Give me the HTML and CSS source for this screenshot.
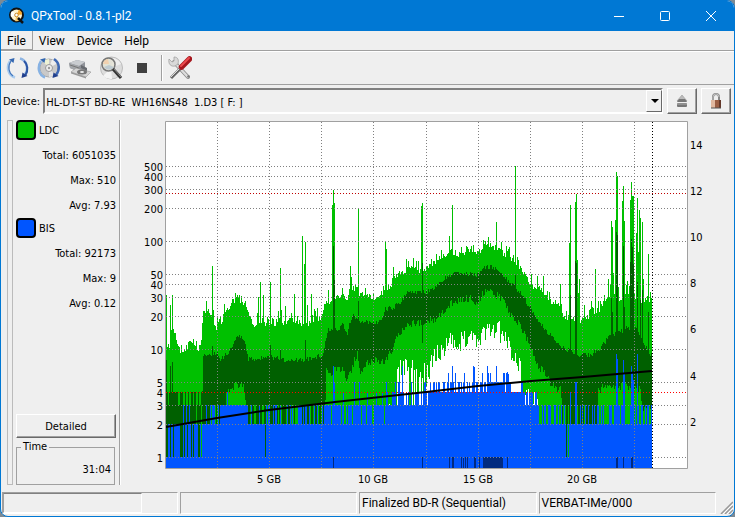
FILE: index.html
```html
<!DOCTYPE html>
<html lang="en">
<head>
    <meta charset="UTF-8">
    <meta name="viewport" content="width=device-width, initial-scale=1.0">
    <title>QPxTool - 0.8.1-pl2</title>
    <link rel="stylesheet" href="styles.css">
</head>
<body>
    <div class="window">
        <header class="titlebar">
            <svg class="app-icon" width="18" height="18" viewBox="0 0 18 18">
                <circle cx="8.500" cy="8" r="6.500" fill="#fff3d0" stroke="#111" stroke-width="2"/>
                <path d="M8.500 8L4 4a6 6 0 0 0-1 6z" fill="#fff"/>
                <path d="M8.500 8L11 2.500a6 6 0 0 1 3 5z" fill="#f6a62a"/>
                <path d="M8.500 8L7 14a6 6 0 0 0 5-1z" fill="#f8c96a"/>
                <circle cx="8.500" cy="8" r="1.800" fill="#fff" stroke="#c98a2a"/>
                <path d="M10 11l5 5" stroke="#111" stroke-width="2.500"/>
            </svg>
            <span class="title">QPxTool - 0.8.1-pl2</span>
            <button class="caption" aria-label="Minimize"><svg width="12" height="12" viewBox="0 0 12 12"><path d="M1 6.500h10"/></svg></button>
            <button class="caption" aria-label="Maximize"><svg width="12" height="12" viewBox="0 0 12 12"><rect x="1.500" y="1.500" width="9" height="9" rx="1"/></svg></button>
            <button class="caption" aria-label="Close"><svg width="12" height="12" viewBox="0 0 12 12"><path d="M1 1l10 10M11 1L1 11"/></svg></button>
        </header>

        <nav class="menubar">
            <button class="menu active">File</button>
            <button class="menu">View</button>
            <button class="menu">Device</button>
            <button class="menu">Help</button>
        </nav>

        <div class="toolbar">
            <button class="tool" aria-label="Rescan bus">
                <svg width="24" height="24" viewBox="0 0 24 24" fill="none">
                    <path d="M9 21.500C2 19 0 11 4 5" stroke="#a9cbee" stroke-width="2.500"/>
                    <path d="M7 20C2.500 17 1.500 10 5 5" stroke="#4377bd" stroke-width="1.200"/>
                    <path d="M3 3.500l5.500-1.500-1 5z" fill="#3467b0"/>
                    <path d="M14 2.500c7 2 9 10 5 16" stroke="#8db4e2" stroke-width="2.500"/>
                    <path d="M18 5c3.500 3 4.500 9 1.500 14" stroke="#2d55a4" stroke-width="2"/>
                    <path d="M21.500 20l-6 2 1-5.500z" fill="#213f8c"/>
                </svg>
            </button>
            <button class="tool" aria-label="Reload media">
                <svg width="24" height="24" viewBox="0 0 24 24" fill="none">
                    <circle cx="12" cy="12" r="9" fill="#c9c9c9" stroke="#aaa"/>
                    <path d="M12 12L6 5.500A9 9 0 0 1 12 3z" fill="#eef3d5"/>
                    <path d="M12 12l3-8.500a9 9 0 0 1 5 4z" fill="#eee"/>
                    <path d="M12 12l6 7a9 9 0 0 1-6 2z" fill="#e3e3e3"/>
                    <circle cx="12" cy="12" r="3.500" fill="#eee" stroke="#999"/>
                    <circle cx="12" cy="12" r="1.200" fill="#999"/>
                    <path d="M8 21.500C1.500 19 0 11 4 5" stroke="#87b2e3" stroke-width="2.500"/>
                    <path d="M3 3.500l5.500-1.500-1 5z" fill="#3467b0"/>
                    <path d="M17 3c6 4 6 11 2 16" stroke="#3e68b4" stroke-width="2.500"/>
                    <path d="M21.500 20l-6 2 1-5.500z" fill="#213f8c"/>
                </svg>
            </button>
            <button class="tool" aria-label="Device info">
                <svg width="24" height="24" viewBox="0 0 24 24">
                    <path d="M1 7l8-3 8 2v7l-5 3L2 12z" fill="#8f9298"/>
                    <path d="M1 7l8-3 8 2-6 4z" fill="#c9ccd0"/>
                    <path d="M1 7l10 3v6L2 12z" fill="#a3a6aa"/>
                    <path d="M3 16l5-4 15 4-5 5z" fill="#d4d4d4" stroke="#888" stroke-width=".5"/>
                    <path d="M3 16l15 5v1.500L3 17.500z" fill="#999"/>
                    <ellipse cx="14" cy="16" rx="5" ry="2.500" fill="#777"/>
                    <ellipse cx="14" cy="16" rx="2" ry="1" fill="#eee"/>
                    <path d="M13 9l6 3v3l-6-3z" fill="#686b70"/>
                    <path d="M2 9l9 3" stroke="#777"/>
                </svg>
            </button>
            <button class="tool" aria-label="Media info">
                <svg width="26" height="24" viewBox="0 0 26 24" fill="none">
                    <circle cx="13.500" cy="12" r="11" fill="#dcdcdc" stroke="#bbb"/>
                    <path d="M13 12L3 8a11 11 0 0 1 8-7z" fill="#d5e7d3"/>
                    <path d="M13 12l2-10a11 11 0 0 1 8 6z" fill="#eee"/>
                    <path d="M13 12L5 20a11 11 0 0 0 9 3z" fill="#f4f4f4"/>
                    <circle cx="10.500" cy="8.500" r="6.500" fill="#e4e2d4" fill-opacity=".8" stroke="#777" stroke-width="1.500"/>
                    <path d="M5 8a6 6 0 0 1 5-5l1 5z" fill="#f1d1b0"/>
                    <path d="M6 11l5-2 5 2a6 6 0 0 1-10 0z" fill="#bfcbd1"/>
                    <path d="M15 13l8 9" stroke="#333" stroke-width="3"/>
                    <path d="M16 13l7 8" stroke="#888"/>
                </svg>
            </button>
            <button class="tool" aria-label="Stop">
                <svg width="24" height="24" viewBox="0 0 24 24"><rect x="7" y="7" width="10" height="10" fill="#404040"/></svg>
            </button>
            <span class="tool-sep"></span>
            <button class="tool" aria-label="Preferences">
                <svg width="24" height="24" viewBox="0 0 24 24" fill="none">
                    <path d="M6 6l14 15" stroke="#888" stroke-width="4" stroke-linecap="round"/>
                    <path d="M6 6l14 15" stroke="#dcdcdc" stroke-width="2.500" stroke-linecap="round"/>
                    <path d="M1 3l3 3 2-1V1c4 0 5 3 4 7l-3 2C3 11 0 8 1 3z" fill="#d9d9d9" stroke="#999" stroke-width=".7"/>
                    <circle cx="20.500" cy="20.500" r="1.300" fill="#777"/>
                    <path d="M13 12L3 22" stroke="#666" stroke-width="3"/>
                    <path d="M12 12L3 21" stroke="#ddd"/>
                    <path d="M13.500 11l8-8" stroke="#a5161d" stroke-width="5.500" stroke-linecap="round"/>
                    <path d="M13 10l8-8" stroke="#ec4a4e" stroke-width="2" stroke-linecap="round"/>
                </svg>
            </button>
        </div>

        <div class="device-row">
            <label for="device">Device:</label>
            <div class="combo">
                <select id="device">
                    <option>HL-DT-ST BD-RE &nbsp;WH16NS48 &nbsp;1.D3 [ F: ]</option>
                </select>
                <span class="combo-arrow"></span>
            </div>
            <button class="push icon-push" aria-label="Eject">
                <svg width="12" height="14" viewBox="0 0 12 14">
                    <path d="M6 1l5 6H1z" fill="#bbb" stroke="#999" stroke-width=".6"/>
                    <path d="M3 5h6l2 3H1z" fill="#777"/>
                    <rect x="1" y="9" width="10" height="4" rx="1" fill="#777"/>
                    <path d="M1 10h10" stroke="#aaa"/>
                </svg>
            </button>
            <button class="push icon-push" aria-label="Lock">
                <svg width="12" height="18" viewBox="0 0 12 18">
                    <path d="M3 9V5a3 3 0 0 1 6 0v4" fill="none" stroke="#888" stroke-width="2"/>
                    <path d="M3 8V5a3 3 0 0 1 6 0" fill="none" stroke="#ccc" stroke-width=".8"/>
                    <rect x="1" y="8" width="10" height="8" rx="1" fill="#9a5e44"/>
                    <rect x="1" y="8" width="4" height="8" fill="#e0b8a0"/>
                    <rect x="9" y="8" width="2" height="8" fill="#63382a"/>
                    <path d="M1 16h10" stroke="#555"/>
                </svg>
            </button>
        </div>

        <main class="content">
            <div class="splitter"></div>
            <aside class="side">
                <section class="stat">
                    <h2><span class="swatch ldc"></span>LDC</h2>
                    <p>Total: 6051035</p>
                    <p>Max: 510</p>
                    <p>Avg: 7.93</p>
                </section>
                <section class="stat">
                    <h2><span class="swatch bis"></span>BIS</h2>
                    <p>Total: 92173</p>
                    <p>Max: 9</p>
                    <p>Avg: 0.12</p>
                </section>
                <button class="push detailed">Detailed</button>
                <fieldset class="time">
                    <legend>Time</legend>
                    <output>31:04</output>
                </fieldset>
            </aside>
            <div class="divider"></div>
            <svg class="chart" id="chart" viewBox="0 0 613 370" role="img" aria-label="LDC and BIS error rate"></svg>
        </main>

        <footer class="statusbar">
            <div class="pane first"><div class="progress"></div></div>
            <div class="pane"></div>
            <div class="pane">Finalized BD-R (Sequential)</div>
            <div class="pane">VERBAT-IMe/000</div>
            <svg class="grip" width="14" height="14" viewBox="0 0 14 14">
                <path d="M2 14L14 2M6 14l8-8M10 14l4-4" stroke="#999" stroke-width="1.500"/>
                <path d="M4 14L14 4M8 14l6-6" stroke="#fff"/>
            </svg>
        </footer>
    </div>
    <script src="chart.js"></script>
</body>
</html>
```
FILE: styles.css
```css
* {
    box-sizing: border-box;
}
body {
    margin: 0;
    background: #7d8a94;
    color: #000;
    font: 11px "DejaVu Sans Condensed", "Noto Sans", sans-serif;
}
button, select {
    font: inherit;
    color: inherit;
    margin: 0;
    padding: 0;
    border: 0;
    background: none;
}
.window {
    min-height: 100vh;
    display: flex;
    flex-direction: column;
    border: 1px solid #0078d4;
    border-radius: 8px;
    background: #efefef;
    overflow: hidden;
}
.titlebar {
    display: flex;
    align-items: center;
    height: 30px;
    padding-left: 7px;
    background: #0078d4;
    color: #fff;
    font: 12px Roboto, "Open Sans", sans-serif;
}
.title {
    flex: 1;
    margin-left: 5px;
}
.caption {
    width: 46px;
    height: 30px;
    line-height: 0;
}
.caption svg {
    fill: none;
    stroke: #fff;
}
.menubar {
    display: flex;
    height: 20px;
    border-bottom: 1px solid #a0a0a0;
    font: 12px Roboto, "Open Sans", sans-serif;
}
.menu {
    padding: 0 6px;
    height: 19px;
    line-height: 20px;
}
.menu.active {
    border-right: 1px solid #a0a0a0;
    border-bottom: 1px solid #a0a0a0;
}
.toolbar {
    display: flex;
    align-items: center;
    gap: 3px;
    height: 34px;
    padding-left: 3px;
    border-top: 1px solid #fff;
    border-bottom: 1px solid #a0a0a0;
}
.tool {
    width: 28px;
    line-height: 0;
}
.tool-sep {
    width: 2px;
    height: 26px;
    margin-left: 2px;
    border-left: 1px solid #a0a0a0;
    border-right: 1px solid #fff;
}
.device-row {
    display: flex;
    align-items: center;
    gap: 4px;
    padding: 3px 3px 3px 2px;
}
.device-row label {
    margin-right: -1px;
    line-height: 16px;
    padding-top: 2px;
}
.combo {
    position: relative;
    flex: 1;
}
.combo select {
    appearance: none;
    display: block;
    width: 100%;
    height: 26px;
    padding: 2px 0 0 1px;
    border: 2px solid;
    border-color: #808080 #fff #fff #808080;
    background: #efefef;
}
.combo-arrow {
    position: absolute;
    top: 2px;
    right: 1px;
    width: 16px;
    height: 22px;
    border: 1px solid;
    border-color: #fff #696969 #696969 #fff;
    pointer-events: none;
}
.combo-arrow::after {
    content: "";
    position: absolute;
    top: 8px;
    left: 4px;
    border: 4px solid transparent;
    border-top-color: #000;
    border-bottom: 0;
}
.push {
    border: 1px solid;
    border-color: #fff #696969 #696969 #fff;
    box-shadow: inset -1px -1px #a0a0a0;
    background: #efefef;
}
.icon-push {
    display: flex;
    align-items: center;
    justify-content: center;
    width: 30px;
    height: 26px;
}
.content {
    flex: 1;
    display: flex;
    align-items: stretch;
}
.splitter {
    width: 6px;
    margin: 3px 3px 2px 6px;
    border: 1px solid #bbb;
}
.side {
    display: flex;
    flex-direction: column;
    width: 100px;
    padding: 3px 0 2px;
}
.stat h2 {
    display: flex;
    align-items: center;
    gap: 3px;
    height: 20px;
    margin: 0 0 3px;
    font: inherit;
}
.stat p {
    margin: 0;
    line-height: 25px;
    text-align: right;
}
.swatch {
    width: 20px;
    height: 20px;
    border: 2px solid #000;
    border-radius: 4px;
}
.swatch.ldc {
    background: #00c000;
}
.swatch.bis {
    background: #0055ff;
}
.detailed {
    height: 24px;
    margin-top: auto;
}
.time {
    margin: 2px 1px 0 0;
    padding: 8px 3px 6px;
    border: 1px solid #a0a0a0;
}
.time legend {
    margin-left: 1px;
    padding: 0 2px;
    line-height: 14px;
}
.time output {
    display: block;
    line-height: 16px;
    text-align: right;
}
.divider {
    width: 2px;
    margin: 3px 0 2px 3px;
    border-left: 1px solid #a0a0a0;
    border-right: 1px solid #fff;
}
.chart {
    flex: 1;
    min-width: 0;
    align-self: flex-start;
}
.statusbar {
    display: flex;
    gap: 2px;
    padding: 5px 1px 2px;
    font: 12px Roboto, "Open Sans", sans-serif;
}
.pane {
    flex: 1;
    height: 22px;
    padding-left: 2px;
    border: 1px solid;
    border-color: #a0a0a0 #fff #fff #a0a0a0;
    line-height: 21px;
    white-space: nowrap;
}
.pane.first {
    padding-left: 0;
}
.progress {
    width: 80%;
    height: 20px;
    border: 1px solid;
    border-color: #808080 #fff #fff #a0a0a0;
}
.grip {
    align-self: flex-end;
    margin-left: 1px;
}
```
FILE: chart.js
```js
const NS = 'http://www.w3.org/2000/svg';
const LEFT = 45;
const TOP = 5;
const W = 521;
const H = 346;
const GB = W / 25;
const END = 486;

// log scale for errors, linear scale for speed
const yErr = v => Math.round(335 - 108 * Math.log10(v));
const ySpeed = v => Math.round(H - v * 23.1);

const svg = document.getElementById('chart');
const plot = document.createElementNS(NS, 'g');
plot.setAttribute('transform', `translate(${LEFT} ${TOP})`);
svg.appendChild(plot);

function add(name, attrs, text) {
    const el = document.createElementNS(NS, name);
    for (const key in attrs) el.setAttribute(key, attrs[key]);
    if (text) el.textContent = text;
    plot.appendChild(el);
}

let seed = 7;
function rnd() {
    seed = (seed * 16807) % 2147483647;
    return seed / 2147483647;
}

function at(points, x) {
    let i = 0;
    while (i < points.length - 2 && points[i + 1][0] <= x) i++;
    const [x0, y0] = points[i];
    const [x1, y1] = points[i + 1];
    return y0 + (y1 - y0) * Math.min(1, (x - x0) / (x1 - x0));
}

// profiles are [column, height in plot units]
const ldcMax = [[0,222],[3,223],[5,210],[9,213],[12,228],[20,226],[24,218],[28,222],[34,226],[36,210],[37,190],[44,190],[50,204],[56,198],[59,190],[66,181],[71,170],[74,178],[79,181],[84,198],[86,201],[100,200],[125,200],[140,201],[155,198],[159,183],[164,178],[169,175],[177,170],[181,178],[185,164],[191,165],[194,173],[211,175],[216,172],[217,165],[224,165],[227,156],[234,151],[244,146],[254,149],[261,146],[267,141],[274,135],[281,131],[287,130],[294,133],[301,128],[307,131],[314,128],[319,121],[326,124],[334,129],[341,134],[349,140],[356,148],[361,158],[366,164],[374,165],[381,178],[394,181],[397,191],[402,195],[417,198],[422,196],[424,188],[434,188],[437,178],[444,171],[449,178],[460,170],[477,178],[486,178]];
const ldcPeaks = {0:173,4:183,6:173,40:179,46:144,92:175,94:160,97:173,104:160,114:146,119:184,128:172,136:114,138:142,139:120,141:183,145:172,151:186,166:83,167:68,168:81,184:144,192:87,199:166,219:119,220:127,227:145,242:139,247:136,250:139,255:84,256:81,265:137,270:132,275:128,283:114,286:83,300:124,305:124,317:118,322:115,330:100,349:44,352:138,371:154,377:154,394:162,403:121,404:83,409:80,410:72,411:138,412:171,413:157,418:183,425:179,429:147,442:157,445:99,446:105,447:151,449:98,450:50,451:54,452:165,456:79,457:64,458:99,464:78,465:60,466:74,467:74,470:111,471:76,472:130,473:88,474:96,476:100,477:157,482:132,484:170};
const midTop = [[0,270],[36,270],[37,232],[51,232],[54,237],[59,233],[64,228],[67,220],[71,213],[76,216],[79,221],[82,237],[104,235],[119,238],[140,238],[157,233],[159,218],[162,206],[166,210],[176,203],[181,211],[186,192],[194,201],[204,200],[211,202],[216,195],[219,188],[227,185],[232,183],[241,171],[261,170],[267,166],[276,158],[284,153],[297,151],[311,153],[317,145],[331,146],[337,154],[344,161],[354,171],[364,186],[371,199],[381,210],[387,216],[394,223],[401,228],[414,233],[424,233],[434,226],[444,213],[452,211],[461,206],[471,208],[477,221],[486,235]];
const midPeaks = {0:238,4:244,6:240,46:224,104:223,114:228,139:218,167:124,168:158,192:179,219:185,256:141,349:153,404:173,409:139,410:141,445:176,446:190,450:110,451:113,457:124,458:185,464:140,465:117,466:125,467:142,471:160,474:178,476:168,482:190};
const midBottom = [[0,303],[59,303],[60,270],[66,270],[68,262],[77,262],[79,280],[80,303],[158,303],[160,245],[164,251],[177,245],[181,260],[186,245],[191,230],[194,251],[199,241],[207,238],[217,240],[224,231],[229,218],[237,205],[247,201],[257,200],[267,198],[276,191],[281,183],[289,180],[297,178],[304,175],[311,181],[317,171],[327,170],[336,178],[344,192],[354,203],[361,218],[367,231],[372,245],[381,253],[384,262],[394,268],[397,303],[431,303],[432,268],[444,262],[474,268],[476,286],[486,290]];
const ldcMin = [[0,346],[221,346],[222,284],[230,280],[231,251],[237,243],[247,240],[257,250],[262,255],[266,235],[274,228],[284,221],[297,218],[307,213],[314,217],[321,205],[331,207],[341,220],[344,231],[354,245],[357,270],[371,284],[372,346],[486,346]];
const bisPeaks = {99:335,167:244,168:260,188:260,193:260,245:260,259:260,236:244,450:232,451:237,457:238,458:252,465:244,466:250,467:258,471:232,404:270,409:260,410:260,400:335,402:335,307:244,308:245,286:244,321:244,330:244,341:250,342:252};

const Y2 = yErr(2), Y3 = yErr(3), Y4 = yErr(4), Y5 = yErr(5), Y6 = yErr(6);

function bisTop(x) {
    if (x in bisPeaks) return bisPeaks[x];
    const r = rnd();
    if (x < 36) return r < 0.45 ? yErr(1) : r < 0.96 ? Y2 : Y3;
    if (x < 59) return r < 0.5 ? Y3 : Y2;
    if (x < 81) return r < 0.9 ? Y3 : Y4;
    if (x < 158) return r < 0.25 ? Y3 : Y2;
    if (x < 220) return r < 0.68 ? Y3 : r < 0.84 ? Y2 : Y4;
    if (x < 262) return r < 0.4 ? Y3 : r < 0.9 ? Y4 : Y5;
    if (x < 317) return r < 0.5 ? Y4 : r < 0.9 ? Y5 : Y6;
    if (x < 341) return r < 0.15 ? Y4 : r < 0.75 ? Y5 : Y6;
    if (x < 357) return r < 0.5 ? Y5 : Y4;
    if (x < 372) return r < 0.5 ? Y4 : Y3;
    return r < (x < 400 || x > 440 ? 0.5 : 0.25) ? Y3 : Y2;
}

const paths = { ldc: '', mid: '', bis: '', bisMid: '' };
const bar = (x, y0, y1) => y1 > y0 ? `M${x} ${Math.round(y0)}h1V${Math.round(y1)}h-1z` : '';

for (let x = 0; x < END; x++) {
    const noise = x < 220 || x > 395 ? 9 : 6;
    let top = at(ldcMax, x) + (rnd() - 0.5) * noise;
    if (rnd() < 0.12) top -= 8;
    if (x in ldcPeaks) top = ldcPeaks[x];
    let mid = at(midTop, x) + (rnd() - 0.5) * 5;
    if (x < 36) mid = rnd() < 0.25 ? Y3 : Y4;
    if (x in midPeaks) mid = midPeaks[x];
    let midEnd = at(midBottom, x) + (rnd() - 0.5) * 8;
    if ([167, 256, 404, 409, 410, 450, 451, 465, 466].includes(x)) midEnd += 25;
    if (midEnd > 292 && rnd() < (x < 36 ? 0.1 : 0.35)) midEnd = Y3;
    else if (midEnd > 292) midEnd = H;
    let min = at(ldcMin, x);
    if (min < 346) min += (rnd() - 0.5) * 22;
    if (x > 221 && x < 262 && rnd() < 0.4) min = H;
    paths.ldc += bar(x, top, Math.min(min, H));
    paths.mid += bar(x, mid, Math.min(midEnd, min));
    paths.bis += bar(x, bisTop(x), H);
}

const bisDark = [167, 256, 283, 286, 287, 295, 297, 299, 301, 308, 309, 313, 341, 450, 451, 457, 465, 466];
for (let x = 317; x < 337; x++) bisDark.push(x);
bisDark.forEach(x => { paths.bisMid += bar(x, yErr(1), H); });

add('rect', { x: 0, y: 0, width: W, height: H, fill: '#fff' });
const crisp = 'crispEdges';
add('path', { d: paths.ldc, fill: '#00c000', 'shape-rendering': crisp });
add('path', { d: paths.mid, fill: '#006000', 'shape-rendering': crisp });
add('path', { d: paths.bis, fill: '#0055ff', 'shape-rendering': crisp });
add('path', { d: paths.bisMid, fill: '#002a80', 'shape-rendering': crisp });

function dotted(d, stroke) {
    add('path', { d, stroke, fill: 'none', 'stroke-dasharray': '1 2', 'shape-rendering': crisp });
}

const font = { 'font-family': '"DejaVu Sans Condensed", "Noto Sans", sans-serif', 'font-size': 11 };

[1, 2, 3, 4, 5, 10, 20, 30, 40, 50, 100, 200, 300, 400, 500].forEach(v => {
    const y = yErr(v);
    if (v !== 4) dotted(`M0 ${y + 0.5}H${W}`, '#808080');
    add('text', { ...font, x: -3, y: y + 5, 'text-anchor': 'end' }, String(v));
});
for (let gb = 2.5; gb < 25; gb += 2.5) {
    const x = Math.round(gb * GB) - 1;
    dotted(`M${x + 0.5} 0V${H}`, '#808080');
    if (gb % 5 === 0) add('text', { ...font, x, y: H + 15, 'text-anchor': 'middle' }, `${gb} GB`);
}
for (let v = 2; v <= 14; v += 2) {
    add('text', { ...font, x: W + 3, y: ySpeed(v) + 4 }, String(v));
}

// error limits and end of disc
dotted(`M0 ${Y4 + 0.5}H${W}`, '#ff0000');
dotted(`M0 ${yErr(280) + 0.5}H${W}`, '#c00000');
dotted(`M${END + 0.5} 0V${H}`, '#000');

// read speed
add('path', {
    d: 'M0 305L51 296L103 288L169 280L260 270L312 264L365 259L417 255L486 249',
    fill: 'none', stroke: '#000', 'stroke-width': 2
});
add('path', { d: `M-.5 ${H + 0.5}V-.5H${W + 0.5}V${H + 0.5}z`, fill: 'none', stroke: '#a0a0a0' });
```
